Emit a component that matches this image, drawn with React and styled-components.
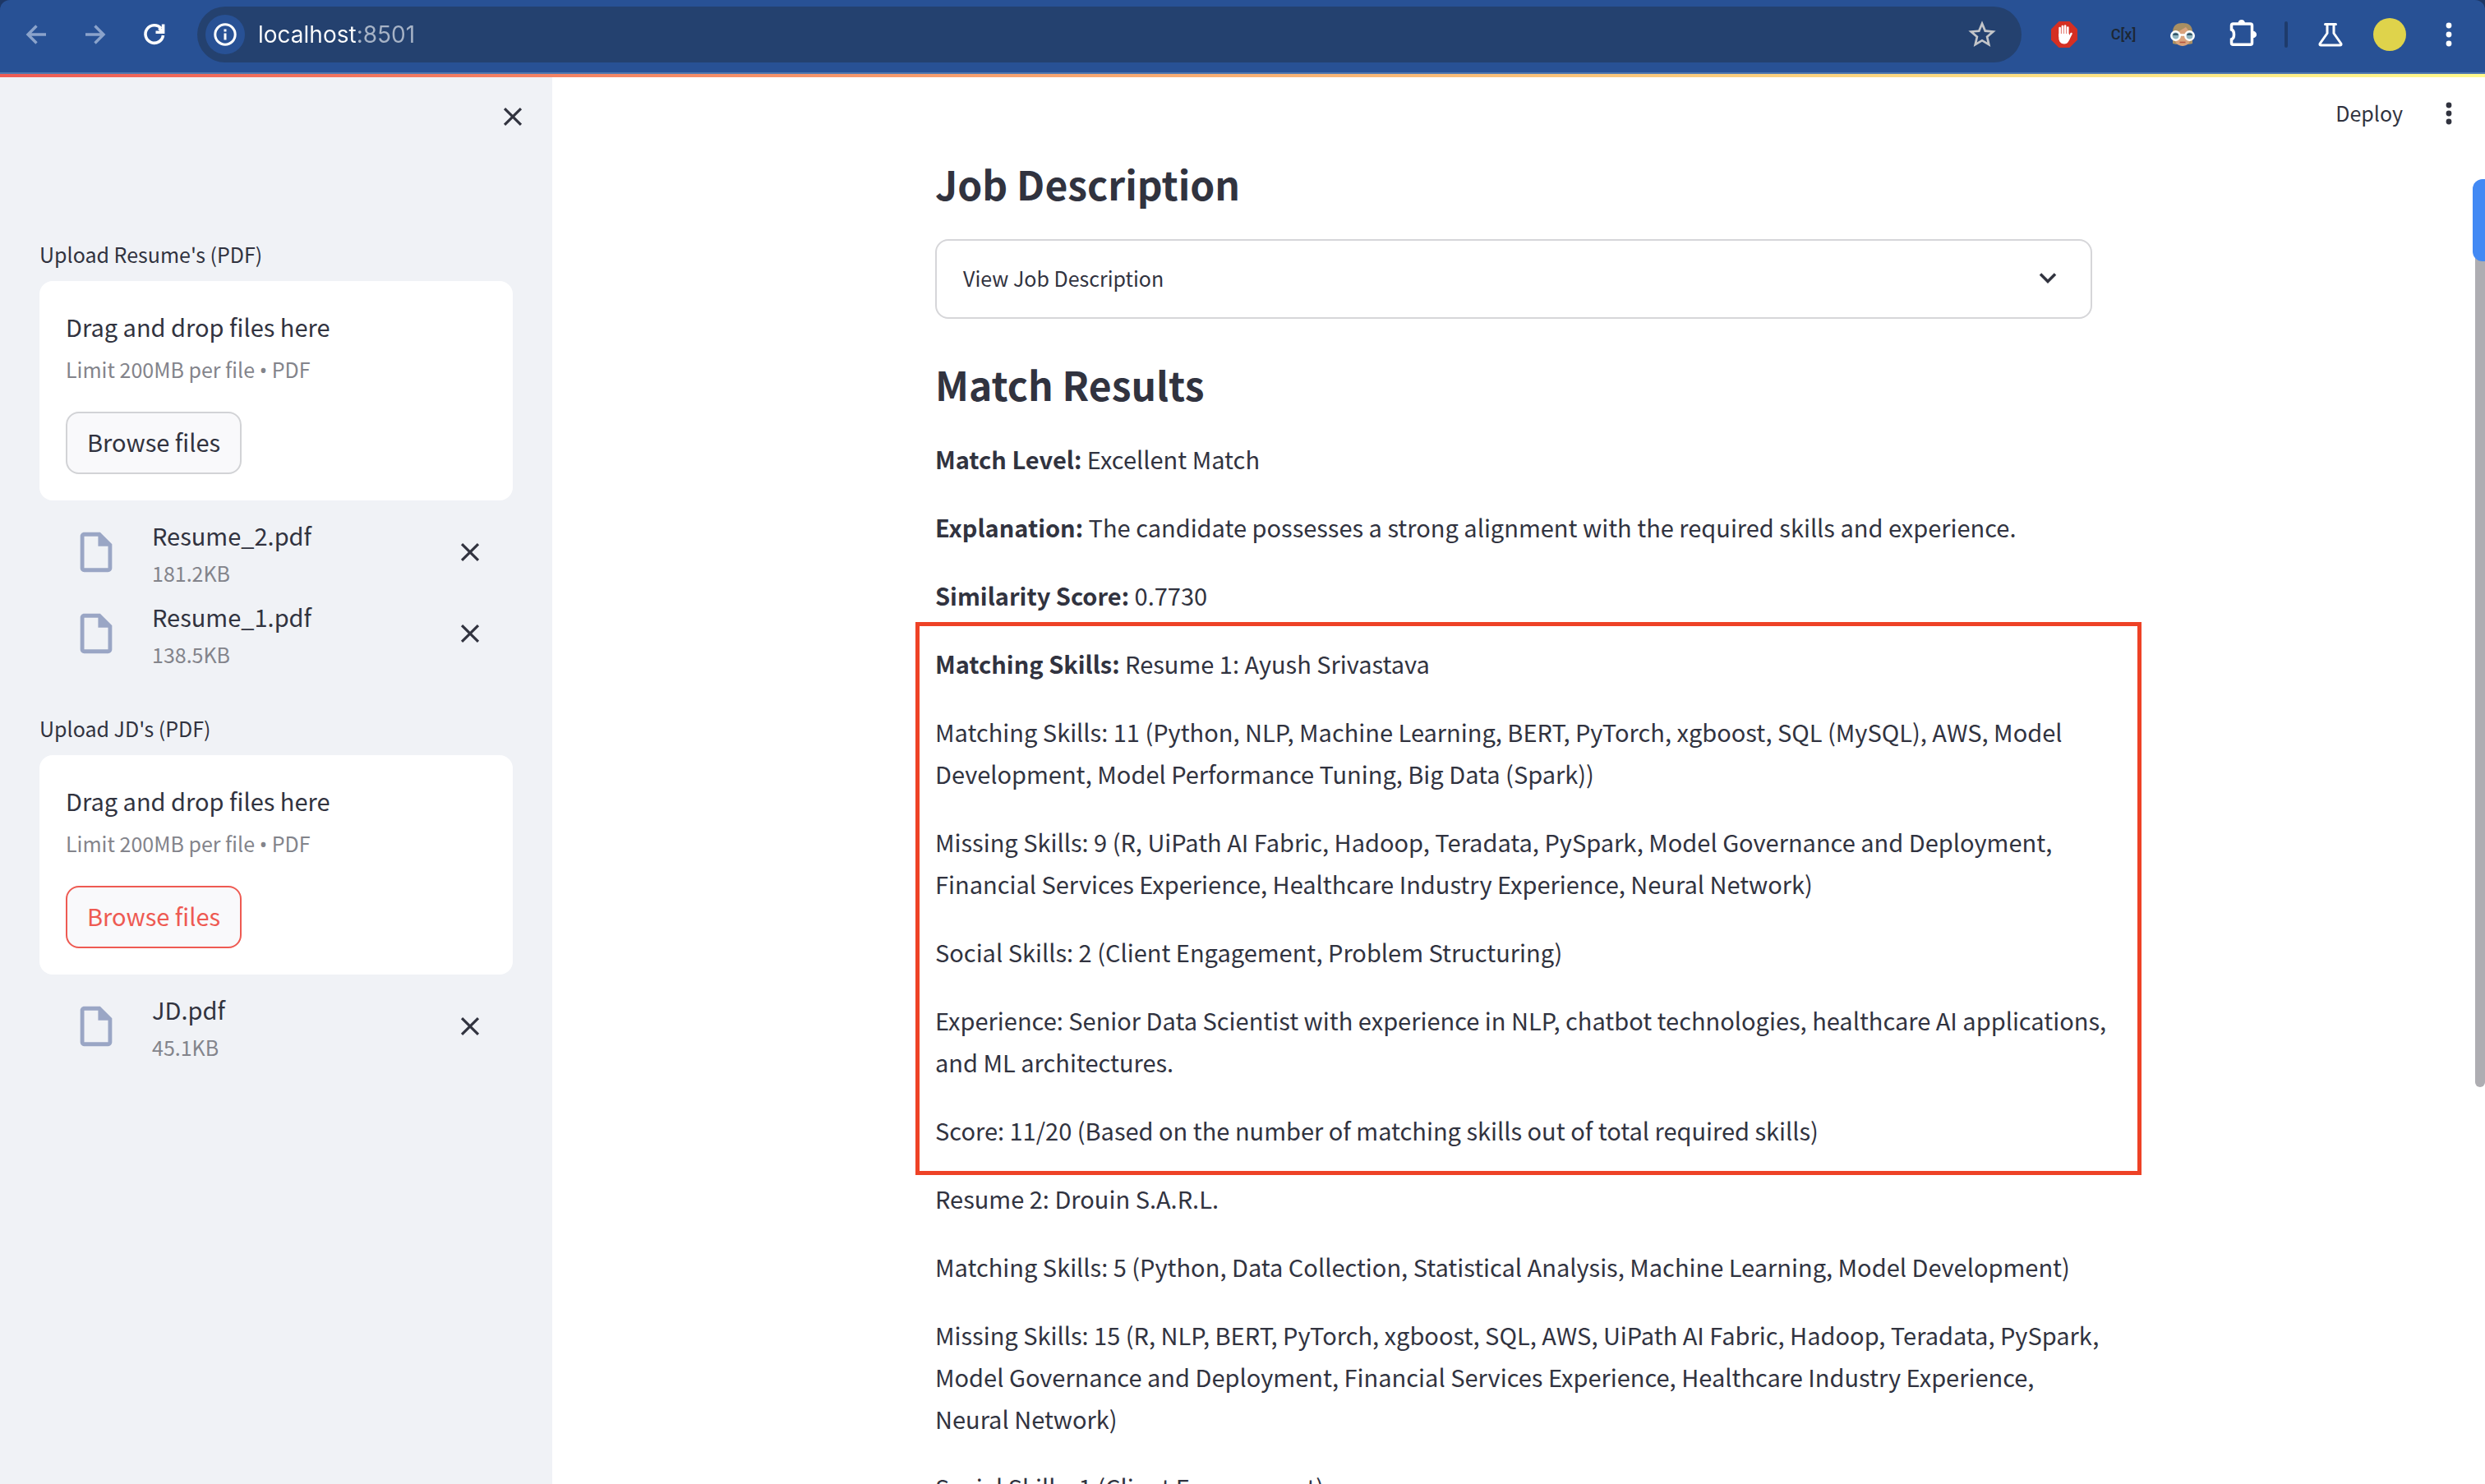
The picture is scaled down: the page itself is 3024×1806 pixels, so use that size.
import React from "react";
import styled, { createGlobalStyle } from "styled-components";

const INK = "#31333f";
const MUTED = "#83848b";
const RED = "#ee5a52";

const GlobalStyle = createGlobalStyle`
  *, *::before, *::after { box-sizing: border-box; }
  body { margin: 0; background: #1d3765; }
  button { font: inherit; color: inherit; cursor: pointer; }
  h2, p, ul { margin: 0; padding: 0; }
`;

const Page = styled.div`
  display: flex;
  flex-direction: column;
  height: 100vh;
  overflow: hidden;
  color: ${INK};
  font-family: "Noto Sans CJK SC", "Noto Sans", sans-serif;
  font-size: 29px;
  line-height: 51px;
`;

/* Browser toolbar */
const Toolbar = styled.header`
  flex: none;
  display: flex;
  align-items: center;
  gap: 24px;
  height: 90px;
  padding: 0 20px 4px;
  background: #285195;
  border-bottom: 2px solid #5078b0;
  border-radius: 12px 12px 0 0;
  color: #fff;
`;

const ToolButton = styled.button`
  flex: none;
  display: flex;
  align-items: center;
  justify-content: center;
  width: 48px;
  height: 48px;
  padding: 0;
  border: 0;
  border-radius: 50%;
  background: ${(p) => (p.$filled ? "#285195" : "transparent")};
  color: ${(p) => (p.$dim ? "#8ba3cb" : "#fff")};
`;

const AddressBar = styled.div`
  flex: 1;
  display: flex;
  align-items: center;
  height: 68px;
  margin: 0 4px;
  padding: 0 24px 0 10px;
  border-radius: 34px;
  background: #24416f;
`;

/* The host name is white and the port after it is dimmed. */
const Address = styled.input`
  flex: 1;
  height: 40px;
  margin: 0 16px;
  padding: 0;
  border: 0;
  outline: 0;
  background: linear-gradient(to right, #fff 119px, #a7b3c6 119px);
  background-clip: text;
  -webkit-background-clip: text;
  color: transparent;
  font: 28px "Inter", sans-serif;
`;

const Divider = styled.div`
  width: 4px;
  height: 32px;
  margin: 0 4px;
  border-radius: 2px;
  background: #1e3b6b;
`;

const CodeBadge = styled.span`
  color: #1d2733;
  font: 500 18px/28px "Roboto", sans-serif;
`;

const Avatar = styled.span`
  width: 40px;
  height: 40px;
  border-radius: 50%;
  background: #dfd34b;
`;

const Decoration = styled.div`
  flex: none;
  height: 4px;
  background: linear-gradient(to right, #ee5c55, #f7a16f 40%, #fffa8c);
`;

/* App shell */
const Shell = styled.div`
  flex: 1;
  display: grid;
  grid-template-columns: 672px 1fr;
  min-height: 0;
  background: #fff;
`;

const Sidebar = styled.aside`
  display: flex;
  flex-direction: column;
  padding: 24px 48px;
  background: #f0f2f6;
`;

const SidebarTop = styled.div`
  display: flex;
  justify-content: flex-end;
  height: 171px;
  margin-right: -24px;
`;

const IconButton = styled.button`
  flex: none;
  display: flex;
  align-items: center;
  justify-content: center;
  width: 48px;
  height: 48px;
  padding: 0;
  border: 0;
  background: transparent;
`;

const Uploader = styled.section`
  margin-bottom: 50px;
`;

const UploaderLabel = styled.h2`
  margin-bottom: 13px;
  font-size: 25px;
  font-weight: 400;
  line-height: 40px;
`;

const DropZone = styled.div`
  padding: 30px 32px 32px;
  border-radius: 16px;
  background: #fff;
`;

const Hint = styled.p`
  margin: 6px 0 31px;
  color: ${MUTED};
  font-size: 25px;
  line-height: 40px;
`;

const Bullet = styled.span`
  font-family: "Noto Sans", sans-serif;
`;

const BrowseButton = styled.button`
  display: block;
  height: 76px;
  padding: 0 24px 4px;
  border: 2px solid ${(p) => (p.$active ? RED : "#d2d3d6")};
  border-radius: 16px;
  background: #f9f9fb;
  color: ${(p) => (p.$active ? RED : INK)};
`;

const FileList = styled.ul`
  display: flex;
  flex-direction: column;
  gap: 8px;
  padding: 17px 28px 0 40px;
  list-style: none;
`;

const FileRow = styled.li`
  display: flex;
  align-items: center;
`;

const FileInfo = styled.div`
  flex: 1;
  margin-left: 39px;
`;

const FileSize = styled.div`
  color: ${MUTED};
  font-size: 25px;
  line-height: 40px;
`;

const Main = styled.main`
  position: relative;
  display: flex;
  flex-direction: column;
  min-width: 0;
  min-height: 0;
`;

const AppBar = styled.div`
  flex: none;
  display: flex;
  align-items: center;
  justify-content: flex-end;
  gap: 32px;
  height: 88px;
  padding-right: 20px;
`;

const DeployButton = styled.button`
  padding: 0 0 2px;
  border: 0;
  background: transparent;
  font-size: 25px;
  line-height: 40px;
`;

const Viewport = styled.div`
  flex: 1;
  display: flex;
  min-height: 0;
  overflow: hidden;
`;

const Content = styled.div`
  flex: 1;
  width: 100%;
  max-width: 1408px;
  margin: 0 auto;
  padding-top: 11px;
`;

const Track = styled.div`
  flex: none;
  width: 12px;
  padding-top: 48px;
`;

const Thumb = styled.div`
  height: 1093px;
  border-radius: 6px;
  background: #aeadb2;
`;

const SideTab = styled.div`
  position: absolute;
  top: 124px;
  right: 0;
  width: 15px;
  height: 100px;
  border-radius: 12px 0 0 12px;
  background: #4289f4;
`;

const Heading = styled.h2`
  font-size: 48px;
  font-weight: 600;
  line-height: 60px;
`;

const Expander = styled.details`
  margin: 38px 0 49px;
  border: 2px solid #d6d6d9;
  border-radius: 16px;
`;

const ExpanderSummary = styled.summary`
  display: flex;
  align-items: center;
  justify-content: space-between;
  height: 93px;
  padding: 0 30px 4px 32px;
  list-style: none;
  font-size: 25px;
  line-height: 40px;
  cursor: pointer;
`;

const Results = styled.div`
  display: flex;
  flex-direction: column;
  gap: 32px;
  margin-top: 36px;
  white-space: nowrap;
`;

const Highlight = styled.div`
  position: relative;
  display: flex;
  flex-direction: column;
  gap: 32px;

  &::after {
    content: "";
    position: absolute;
    inset: -25px -60px -29px -24px;
    border: 5px solid #ee4226;
    pointer-events: none;
  }
`;

const Strong = styled.strong`
  font-weight: 600;
`;

/* Icons */
const CloseIcon = () => (
  <svg width="38" height="38" viewBox="0 0 24 24" fill="currentColor" aria-hidden="true">
    <path d="M19 6.41 17.59 5 12 10.59 6.41 5 5 6.41 10.59 12 5 17.59 6.41 19 12 13.41 17.59 19 19 17.59 13.41 12z" />
  </svg>
);

const FileIcon = () => (
  <svg width="58" height="58" viewBox="0 0 24 24" fill="#9aa6c5" aria-hidden="true">
    <path d="M14 2H6c-1.1 0-1.99.9-1.99 2L4 20c0 1.1.89 2 1.99 2H18c1.1 0 2-.9 2-2V8l-6-6zM6 20V4h7v5h5v11H6z" />
  </svg>
);

const ArrowIcon = ({ forward }) => (
  <svg width="32" height="32" viewBox="0 0 32 32" fill="none" stroke="currentColor" strokeWidth="3.4" aria-hidden="true">
    <path d={forward ? "M4 16H26M15.500 5.500L26 16L15.500 26.500" : "M28 16H6M16.500 5.500L6 16L16.500 26.500"} />
  </svg>
);

const ReloadIcon = () => (
  <svg width="38" height="38" viewBox="0 0 38 38" fill="none" stroke="currentColor" strokeWidth="3.6" aria-hidden="true">
    <path d="M29.500 20A10.800 10.800 0 1 1 27 11.500" />
    <path d="M29.600 6.500V16.200H20.500M28 15L24.500 11" />
  </svg>
);

const InfoIcon = () => (
  <svg width="28" height="28" viewBox="0 0 28 28" fill="none" stroke="currentColor" strokeWidth="3" aria-hidden="true">
    <circle cx="14" cy="14" r="12.2" />
    <path d="M14 12.5V20.5M14 7.5V10.5" />
  </svg>
);

const StarIcon = () => (
  <svg width="40" height="40" viewBox="0 0 24 24" fill="#c3c5c9" aria-hidden="true">
    <path d="M22 9.24l-7.19-.62L12 2 9.19 8.63 2 9.24l5.46 4.73L5.82 21 12 17.27 18.18 21l-1.63-7.03L22 9.24zM12 15.4l-3.76 2.27 1-4.28-3.32-2.88 4.38-.38L12 6.1l1.71 4.04 4.38.38-3.32 2.88 1 4.28L12 15.4z" />
  </svg>
);

const HandIcon = () => (
  <svg width="32" height="32" viewBox="0 0 32 32" aria-hidden="true">
    <path d="M9.5 0h13L32 9.5v13L22.5 32h-13L0 22.5v-13z" fill="#d52f22" />
    <g fill="none" stroke="#fff" strokeWidth="2.6" strokeLinecap="round">
      <path d="M10.600 18V8M13.900 16V6M17.100 16V5.500M20.300 18V7.500M24.500 15L21 22" />
    </g>
    <path d="M9.300 15H21.600L23 19C22 24.500 20 27.500 16 27.500C11.500 27.500 9.300 24 9.300 20z" fill="#fff" />
  </svg>
);

const FaceIcon = () => (
  <svg width="32" height="32" viewBox="0 0 32 32" aria-hidden="true">
    <path d="M4 27V13C4 5 9 2 16 2S28 5 28 13V27L24 28H8z" fill="#a98f62" />
    <path d="M6 14C10 13 17 9 20 7C22 10 24 12 26 14V20C26 26 21 30 16 30S6 26 6 20z" fill="#d9a27c" />
    <path d="M12.5 25.500H19.500" stroke="#b5553f" strokeWidth="1.600" />
    <g fill="#8fb4c0" stroke="#fff" strokeWidth="2.5">
      <circle cx="7.500" cy="17.500" r="5.200" />
      <circle cx="24.500" cy="17.500" r="5.200" />
    </g>
    <path d="M4 17A3.600 3.600 0 0 1 11 17zM21 17A3.600 3.600 0 0 1 28 17z" fill="#36566a" />
    <path d="M12.500 16.500H19.500" stroke="#fff" strokeWidth="2.5" />
  </svg>
);

const PuzzleIcon = () => (
  <svg width="40" height="40" viewBox="0 0 40 40" aria-hidden="true">
    <path
      d="M9.500 7H30.500Q32.500 7 32.500 9V30.300Q32.500 32.300 30.500 32.300H9.500Q7.500 32.300 7.500 30.300V26C11.500 24.500 11.500 15.500 7.500 14V9Q7.500 7 9.500 7Z"
      fill="none"
      stroke="#fff"
      strokeWidth="3.5"
    />
    <path d="M15.500 6A4.300 4.600 0 0 1 24 6zM33.500 15.700A4.600 4.300 0 0 1 33.500 24.300z" fill="#fff" />
  </svg>
);

const FlaskIcon = () => (
  <svg width="32" height="32" viewBox="0 0 32 32" fill="none" stroke="#fff" strokeWidth="3" strokeLinejoin="round" strokeLinecap="round" aria-hidden="true">
    <path d="M9.500 3.500H22.500M12 4V14.500L3.200 27C2.500 28.500 3.200 29 4.500 29H27.500C28.800 29 29.500 28.500 28.800 27L20 14.500V4" />
  </svg>
);

const DotsIcon = ({ spread }) => (
  <svg width="32" height="32" viewBox="0 0 32 32" fill="currentColor" aria-hidden="true">
    <circle cx="16" cy={16 - spread} r="3.4" />
    <circle cx="16" cy="16" r="3.4" />
    <circle cx="16" cy={16 + spread} r="3.4" />
  </svg>
);

const ChevronIcon = () => (
  <svg width="44" height="44" viewBox="0 0 44 44" fill="none" stroke="currentColor" strokeWidth="3.5" aria-hidden="true">
    <path d="M13 17.500L22 26.500L31 17.500" />
  </svg>
);

const uploaders = [
  {
    label: "Upload Resume's (PDF)",
    files: [
      { name: "Resume_2.pdf", size: "181.2KB" },
      { name: "Resume_1.pdf", size: "138.5KB" },
    ],
  },
  { label: "Upload JD's (PDF)", active: true, files: [{ name: "JD.pdf", size: "45.1KB" }] },
];

export default function App() {
  return (
    <Page>
      <GlobalStyle />
      <Toolbar>
        <ToolButton $dim aria-label="Back"><ArrowIcon /></ToolButton>
        <ToolButton $dim aria-label="Forward"><ArrowIcon forward /></ToolButton>
        <ToolButton aria-label="Reload"><ReloadIcon /></ToolButton>
        <AddressBar>
          <ToolButton $filled aria-label="Site information"><InfoIcon /></ToolButton>
          <Address aria-label="Address" defaultValue="localhost:8501" spellCheck={false} />
          <ToolButton aria-label="Bookmark"><StarIcon /></ToolButton>
        </AddressBar>
        <ToolButton aria-label="Ad blocker"><HandIcon /></ToolButton>
        <ToolButton><CodeBadge>C[x]</CodeBadge></ToolButton>
        <ToolButton aria-label="Reader"><FaceIcon /></ToolButton>
        <ToolButton aria-label="Extensions"><PuzzleIcon /></ToolButton>
        <Divider />
        <ToolButton aria-label="Labs"><FlaskIcon /></ToolButton>
        <ToolButton aria-label="Profile"><Avatar /></ToolButton>
        <ToolButton aria-label="Browser menu"><DotsIcon spread={11} /></ToolButton>
      </Toolbar>
      <Decoration />
      <Shell>
        <Sidebar>
          <SidebarTop>
            <IconButton aria-label="Close sidebar"><CloseIcon /></IconButton>
          </SidebarTop>
          {uploaders.map((u) => (
            <Uploader key={u.label}>
              <UploaderLabel>{u.label}</UploaderLabel>
              <DropZone>
                <p>Drag and drop files here</p>
                <Hint>Limit 200MB per file <Bullet>•</Bullet> PDF</Hint>
                <BrowseButton $active={u.active}>Browse files</BrowseButton>
              </DropZone>
              <FileList>
                {u.files.map((f) => (
                  <FileRow key={f.name}>
                    <FileIcon />
                    <FileInfo>
                      <div>{f.name}</div>
                      <FileSize>{f.size}</FileSize>
                    </FileInfo>
                    <IconButton aria-label={`Remove ${f.name}`}><CloseIcon /></IconButton>
                  </FileRow>
                ))}
              </FileList>
            </Uploader>
          ))}
        </Sidebar>
        <Main>
          <AppBar>
            <DeployButton>Deploy</DeployButton>
            <IconButton aria-label="Main menu"><DotsIcon spread={10} /></IconButton>
          </AppBar>
          <Viewport>
            <Content>
              <Heading>Job Description</Heading>
              <Expander>
                <ExpanderSummary>
                  View Job Description
                  <ChevronIcon />
                </ExpanderSummary>
              </Expander>
              <Heading>Match Results</Heading>
              <Results>
                <p><Strong>Match Level:</Strong> Excellent Match</p>
                <p><Strong>Explanation:</Strong> The candidate possesses a strong alignment with the required skills and experience.</p>
                <p><Strong>Similarity Score:</Strong> 0.7730</p>
                <Highlight>
                  <p><Strong>Matching Skills:</Strong> Resume 1: Ayush Srivastava</p>
                  <p>
                    Matching Skills: 11 (Python, NLP, Machine Learning, BERT, PyTorch, xgboost, SQL (MySQL), AWS, Model<br />
                    Development, Model Performance Tuning, Big Data (Spark))
                  </p>
                  <p>
                    Missing Skills: 9 (R, UiPath AI Fabric, Hadoop, Teradata, PySpark, Model Governance and Deployment,<br />
                    Financial Services Experience, Healthcare Industry Experience, Neural Network)
                  </p>
                  <p>Social Skills: 2 (Client Engagement, Problem Structuring)</p>
                  <p>
                    Experience: Senior Data Scientist with experience in NLP, chatbot technologies, healthcare AI applications,<br />
                    and ML architectures.
                  </p>
                  <p>Score: 11/20 (Based on the number of matching skills out of total required skills)</p>
                </Highlight>
                <p>Resume 2: Drouin S.A.R.L.</p>
                <p>Matching Skills: 5 (Python, Data Collection, Statistical Analysis, Machine Learning, Model Development)</p>
                <p>
                  Missing Skills: 15 (R, NLP, BERT, PyTorch, xgboost, SQL, AWS, UiPath AI Fabric, Hadoop, Teradata, PySpark,<br />
                  Model Governance and Deployment, Financial Services Experience, Healthcare Industry Experience,<br />
                  Neural Network)
                </p>
                <p>Social Skills: 1 (Client Engagement)</p>
              </Results>
            </Content>
            <Track><Thumb /></Track>
          </Viewport>
          <SideTab />
        </Main>
      </Shell>
    </Page>
  );
}
